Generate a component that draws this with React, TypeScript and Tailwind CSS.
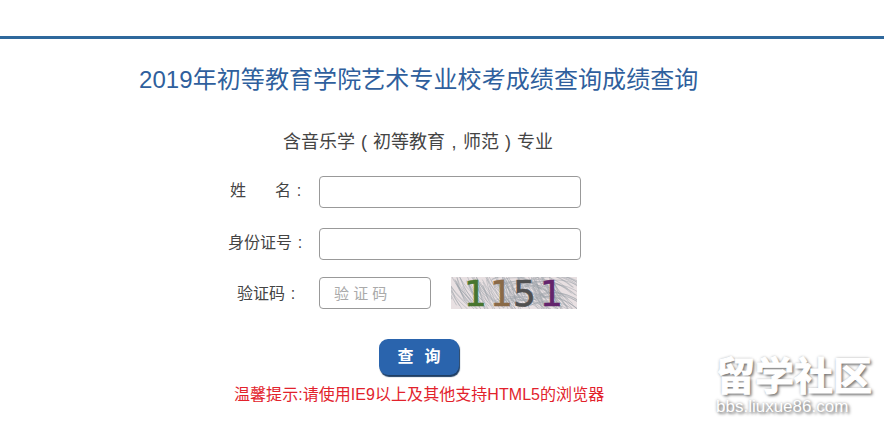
import React from 'react'

const font = "font-['Liberation_Sans','Noto_Sans_CJK_SC',sans-serif]"

// scratchy captcha background, seeded so it draws the same every time
function noiseLines() {
    const lines: string[] = []
    let seed = 11
    const next = () => {
        seed = (seed * 16807) % 2147483647
        return seed / 2147483647
    }
    // steep hatching across the left and middle
    for (let i = 0; i < 110; i++) {
        const x = next() * 110 - 6
        const y = next() * 14 - 4
        const dx = 6 + next() * 18
        lines.push(`M${x.toFixed(1)} ${y.toFixed(1)}Q${(x + dx * 0.3).toFixed(1)} ${(y + 14).toFixed(1)} ${(x + dx).toFixed(1)} ${(y + 26).toFixed(1)}`)
    }
    // flatter arcs fanning out towards the top right
    for (let i = 0; i < 40; i++) {
        const x = 40 + next() * 50
        const y = next() * 30
        lines.push(`M${x.toFixed(1)} ${y.toFixed(1)}Q${(x + 24).toFixed(1)} ${(y - 12).toFixed(1)} ${(x + 50).toFixed(1)} ${(y + 10).toFixed(1)}`)
    }
    return lines
}

function Captcha() {
    return (
        <div className="relative w-[126px] h-[32px] ml-[20px] bg-[#e8e0e2]">
            <svg width="126" height="32" viewBox="0 0 126 32" className="block">
                {noiseLines().map((d, i) => (
                    <path key={i} d={d} fill="none" stroke="#9aa2a8" strokeWidth="0.6" opacity="0.75" />
                ))}
            </svg>
            <div className="absolute inset-0 font-['DejaVu_Sans',sans-serif] text-[36px] leading-[33px] [-webkit-text-stroke:0.6px_currentColor]">
                <span className="absolute left-[13px] text-[#47752f]">1</span>
                <span className="absolute left-[39px] text-[#8a6a48]">1</span>
                <span className="absolute left-[62px] text-[#505050]">5</span>
                <span className="absolute left-[89px] text-[#64246c]">1</span>
            </div>
        </div>
    )
}

// the source font sets this punctuation in the middle of its cell
function Punct({ children, className }: { children: string; className: string }) {
    return <span className={`inline-block text-center ${className}`}>{children}</span>
}

export default function App() {
    return (
        <div className={`relative w-[884px] h-[429px] overflow-hidden bg-white ${font}`}>
            <div className="h-[39px] border-b-[3px] border-[#2f689c]"></div>

            <h1 className="pl-[139px] pt-[24px] text-[24px] leading-[34px] font-normal tracking-[0.08px] text-[#2f5f9d] whitespace-nowrap">
                2019年初等教育学院艺术专业校考成绩查询成绩查询
            </h1>

            <p className="pl-[283px] pt-[32px] text-[18px] leading-[26px] text-[#444] whitespace-nowrap">
                含音乐学<Punct className="w-[18px]">(</Punct>初等教育<Punct className="w-[18px]">,</Punct>师范<Punct className="w-[18px]">)</Punct>专业
            </p>

            <div className="pl-[228px] pt-[21px] text-[16px] text-[#444]">
                <div className="flex items-center h-[32px]">
                    <label className="w-[91px] pl-[2px] pb-[2px] flex whitespace-nowrap">
                        <span>姓</span>
                        <span className="ml-[29px]">名</span>
                        <Punct className="w-[16px]">:</Punct>
                    </label>
                    <input className="w-[262px] h-[32px] border border-[#999] rounded-[4px] bg-white" />
                </div>
                <div className="flex items-center h-[32px] mt-[20px]">
                    <label className="w-[91px] pb-[2px] whitespace-nowrap">
                        身份证号<Punct className="w-[16px]">:</Punct>
                    </label>
                    <input className="w-[262px] h-[32px] border border-[#999] rounded-[4px] bg-white" />
                </div>
                <div className="flex items-center h-[32px] mt-[17px]">
                    <label className="w-[91px] pl-[9px] pt-[2px] whitespace-nowrap">
                        验证码<Punct className="w-[16px]">:</Punct>
                    </label>
                    <input
                        placeholder="验 证 码"
                        className="w-[112px] h-[32px] pl-[14px] border border-[#999] rounded-[4px] bg-white text-[15px] placeholder:text-[#aaa]"
                    />
                    <Captcha />
                </div>
            </div>

            <div className="pl-[379px] pt-[30px]">
                <button className="block w-[80px] h-[36px] rounded-[9px] bg-[#2a64ad] text-white text-[16px] font-bold tracking-[11px] pl-[11px] shadow-[1px_2px_1px_#1d3d63]">
                    查询
                </button>
            </div>

            <p className="pl-[234px] pt-[9px] text-[16px] leading-[22px] tracking-[0.05px] text-[#e2222c] whitespace-nowrap">
                温馨提示:请使用IE9以上及其他支持HTML5的浏览器
            </p>

            {/* watermark sits over the page corner */}
            <div className="absolute left-[716px] top-[356px] w-[168px] text-white [text-shadow:2px_2px_3px_#777,0_0_3px_#999]">
                <div className="text-[39px] leading-[42px] font-bold whitespace-nowrap [-webkit-text-stroke:1px_white]">留学社区</div>
                <div className="text-[17px] leading-[18px] whitespace-nowrap">bbs.liuxue86.com</div>
            </div>
        </div>
    )
}
